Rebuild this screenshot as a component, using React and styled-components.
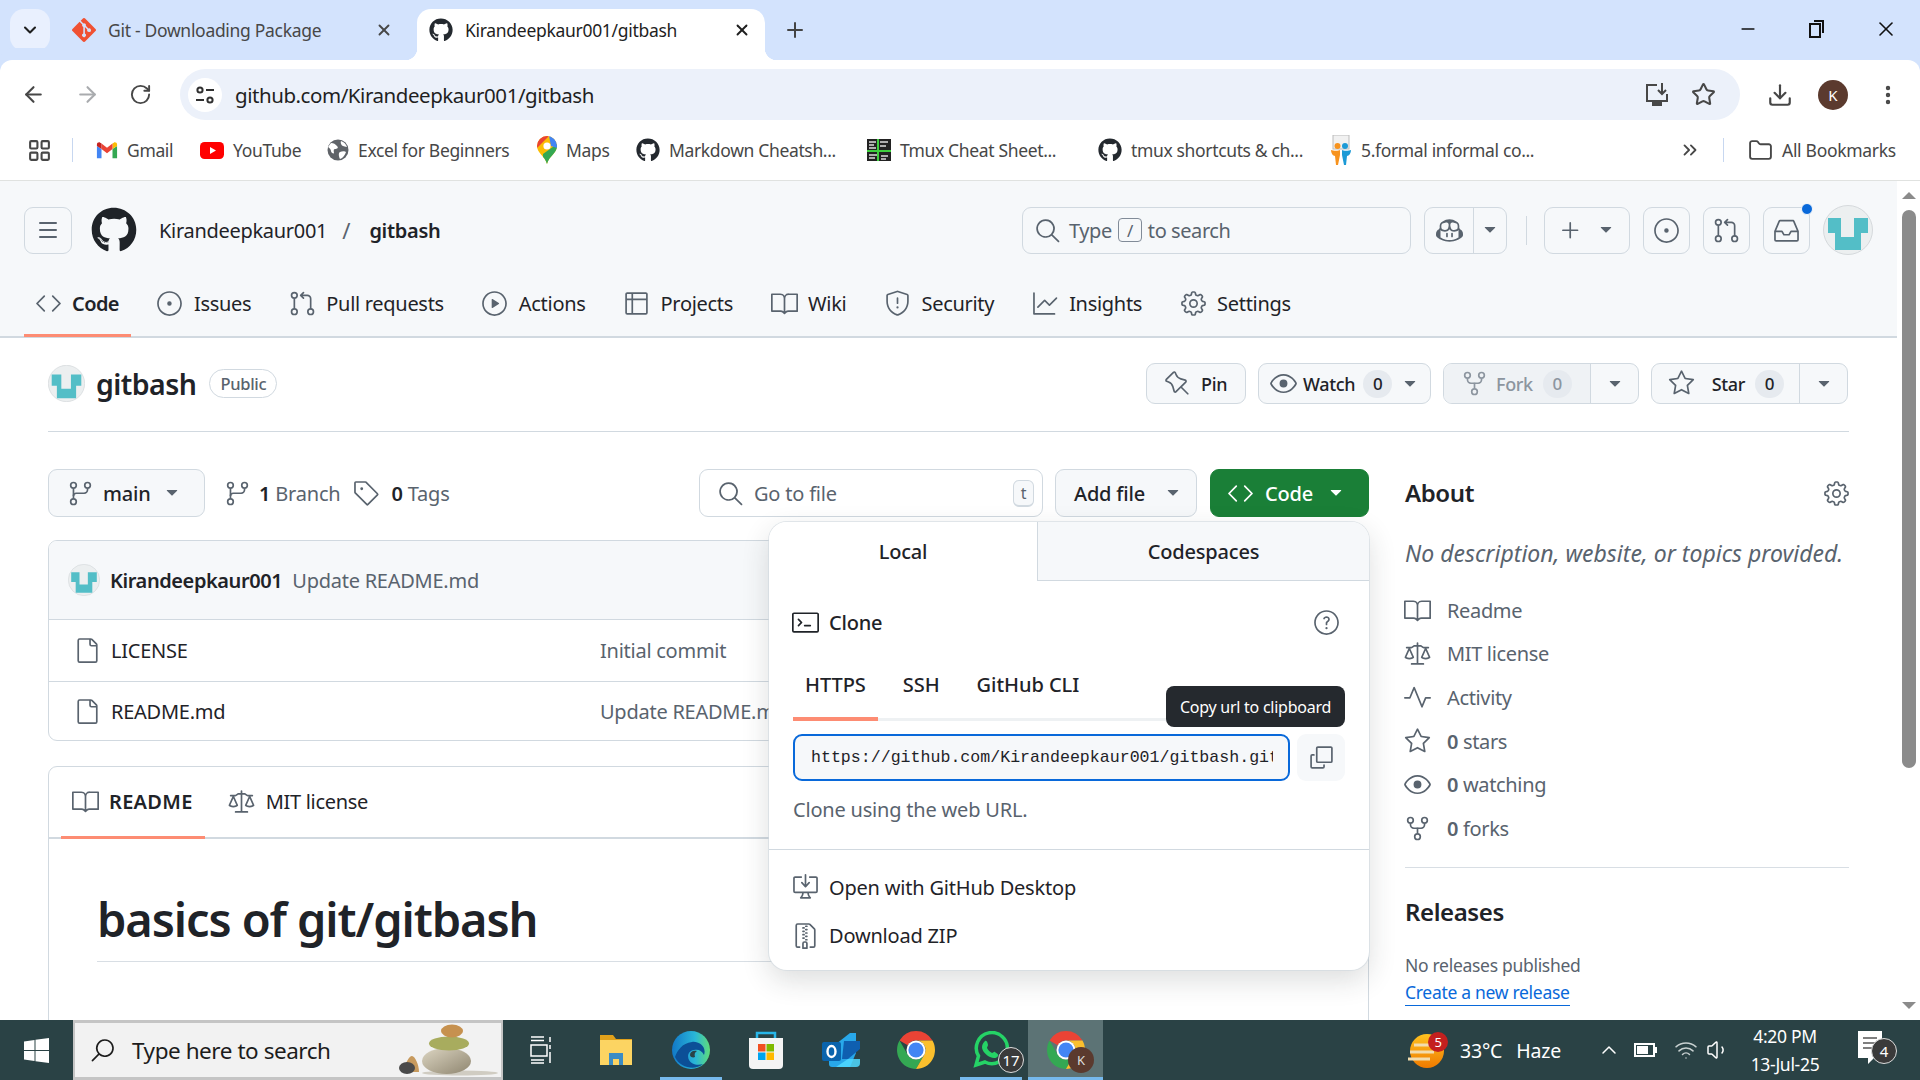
import React from "react";
import styled, { createGlobalStyle } from "styled-components";
import {
  GoBook, GoCode, GoCopilot, GoCopy, GoDesktopDownload, GoEye, GoFile, GoFileZip, GoGear, GoGitBranch,
  GoGitPullRequest, GoGraph, GoInbox, GoIssueOpened, GoLaw, GoPin, GoPlay, GoPlus, GoPulse,
  GoQuestion, GoRepoForked, GoSearch, GoShield, GoStar, GoTable, GoTag, GoTerminal, GoTriangleDown,
} from "react-icons/go";
import { FaGithub } from "react-icons/fa";
import {
  ArrowLeft, ArrowRight, ChevronDown, ChevronUp, ChevronsRight, Download, EllipsisVertical, Folder, LayoutGrid,
  Menu, Minus, Plus, RotateCw, Star, Volume1, Wifi, X,
} from "lucide-react";

const sans = `"Noto Sans", "Open Sans", sans-serif`;
const ink = "#1f2328";
const muted = "#59636e";
const line = "#d1d9e0";

const GlobalStyle = createGlobalStyle`
  html, body { margin: 0; padding: 0; background: #fff; }
  body { font-family: ${sans}; color: ${ink}; }
  * { box-sizing: border-box; }
`;

// octicon drawn a bit larger than its 24px slot, the glyphs have padding in the viewBox
const Oct = styled(({ icon: Icon, className }) => <Icon size={27} className={className} />)`
  margin: -1.5px;
  flex: none;
`;

const Screen = styled.div`
  width: 1920px;
  height: 1080px;
  display: flex;
  flex-direction: column;
  overflow: hidden;
`;

/* browser chrome */
const TabStrip = styled.div`
  height: 60px;
  flex: none;
  display: flex;
  align-items: flex-end;
  background: #d3e3fd;
  padding-left: 10px;
`;
const TabList = styled.div`
  width: 40px;
  height: 42px;
  margin-bottom: 9px;
  border-radius: 14px;
  background: #e9f0fe;
  display: flex;
  align-items: center;
  justify-content: center;
  color: #1f1f1f;
`;
const BrowserTab = styled.div`
  position: relative;
  height: 51px;
  width: ${(p) => p.$w}px;
  margin-left: ${(p) => p.$ml || 0}px;
  padding: 0 ${(p) => p.$pr || 12}px 10px 12px;
  display: flex;
  align-items: center;
  gap: 12px;
  font-size: 17.5px;
  letter-spacing: -0.3px;
  border-radius: 14px 14px 0 0;
  background: ${(p) => (p.$active ? "#fff" : "transparent")};
  color: ${(p) => (p.$active ? "#1f1f1f" : "#474747")};
  span { flex: 1; white-space: nowrap; }
  ${(p) =>
    p.$active &&
    `
    &::before, &::after { content: ""; position: absolute; bottom: 0; width: 12px; height: 12px; }
    &::before { left: -12px; background: radial-gradient(circle at 0 0, #d3e3fd 12px, #fff 12.5px); }
    &::after { right: -12px; background: radial-gradient(circle at 100% 0, #d3e3fd 12px, #fff 12.5px); }
  `}
`;
const NewTab = styled.div`
  margin: 0 0 18px 18px;
  color: #444;
  display: flex;
`;
const WindowButtons = styled.div`
  margin-left: auto;
  align-self: flex-start;
  display: flex;
  height: 58px;
  align-items: center;
  color: #111;
`;
const WindowButton = styled.div`
  width: 69px;
  display: flex;
  justify-content: center;
`;
const Toolbar = styled.div`
  height: 60px;
  flex: none;
  background: #fff;
  display: flex;
  align-items: flex-start;
  padding: 9px 0 0 21px;
  border-radius: 12px 12px 0 0;
  box-shadow: 0 -12px 0 #d3e3fd;
`;
const NavIcon = styled.div`
  width: 54px;
  height: 51px;
  display: flex;
  align-items: center;
  justify-content: flex-start;
  color: ${(p) => (p.$off ? "#a9abae" : "#474747")};
`;
const Omnibox = styled.div`
  width: 1560px;
  height: 51px;
  margin-left: -3px;
  border-radius: 26px;
  background: #ecf1fa;
  display: flex;
  align-items: center;
  padding: 0 24px 0 8px;
`;
const SiteChip = styled.div`
  width: 34px;
  height: 34px;
  border-radius: 50%;
  background: #fff;
  display: flex;
  align-items: center;
  justify-content: center;
`;
const UrlText = styled.div`
  flex: 1;
  margin-left: 13px;
  font-size: 20.5px;
  letter-spacing: -0.45px;
  color: #1f1f1f;
`;
const OmniIcons = styled.div`
  display: flex;
  gap: 21px;
  color: #474747;
`;
const ProfileGroup = styled.div`
  display: flex;
  align-items: center;
  height: 51px;
  margin-left: 27px;
  color: #474747;
`;
const ProfileDot = styled.div`
  width: 30px;
  height: 30px;
  margin: 0 28px 0 25px;
  border-radius: 50%;
  background: #5b3a2e;
  color: #fff;
  font-size: 15px;
  display: flex;
  align-items: center;
  justify-content: center;
`;
const BookmarkBar = styled.div`
  height: 60px;
  flex: none;
  background: #fff;
  display: flex;
  align-items: center;
  padding-left: 27px;
  font-size: 17.5px;
  letter-spacing: -0.35px;
  color: #474747;
`;
const BarSep = styled.div`
  width: 1px;
  height: 24px;
  margin: ${(p) => p.$m};
  background: #c7d7f0;
`;
const Bookmark = styled.div`
  width: ${(p) => p.$w}px;
  display: flex;
  align-items: center;
  gap: 9px;
  white-space: nowrap;
  svg { flex: none; }
`;
const Overflow = styled.div`
  margin-left: auto;
  display: flex;
  align-items: center;
  padding-right: 22px;
  font-size: 17.5px;
  letter-spacing: -0.3px;
`;

/* github page */
const Viewport = styled.div`
  height: 840px;
  flex: none;
  display: flex;
  overflow: hidden;
  border-top: 1px solid #e0e2e0;
`;
const Page = styled.div`
  width: 1897px;
  flex: none;
`;
const AppHeader = styled.header`
  height: 157px;
  background: #f6f8fa;
  border-bottom: 2px solid ${line};
`;
const TopBar = styled.div`
  height: 98px;
  display: flex;
  align-items: center;
  padding: 0 24px;
`;
const HeaderButton = styled.div`
  width: ${(p) => p.$w || 47}px;
  height: 47px;
  flex: none;
  display: flex;
  align-items: center;
  justify-content: center;
  gap: ${(p) => p.$gap || 0}px;
  border: 1px solid ${line};
  border-radius: 9px;
  color: ${muted};
`;
const LogoLink = styled.div`
  margin: 0 22px 0 19px;
  display: flex;
  color: ${ink};
`;
const Crumb = styled.div`
  font-size: 20px;
  letter-spacing: -0.3px;
  font-weight: ${(p) => p.$w || 400};
`;
const CrumbSlash = styled.div`
  font-size: 22px;
  color: ${muted};
  margin: 0 19px 0 15px;
`;
const TopRight = styled.div`
  margin-left: auto;
  display: flex;
  align-items: center;
  gap: 13px;
`;
const SearchBox = styled.div`
  width: 389px;
  height: 47px;
  border: 1px solid ${line};
  border-radius: 9px;
  display: flex;
  align-items: center;
  padding-left: 12px;
  gap: 6px;
  font-size: 20px;
  letter-spacing: -0.42px;
  color: ${muted};
  > svg { margin-right: 2.5px; }
`;
const Kbd = styled.span`
  width: 24px;
  height: 24px;
  border: 1px solid #818b98;
  border-radius: 4px;
  font-size: 17px;
  display: flex;
  align-items: center;
  justify-content: center;
`;
const SplitButton = styled.div`
  width: ${(p) => p.$w}px;
  height: ${(p) => p.$h || 47}px;
  display: flex;
  border: 1px solid ${line};
  border-radius: 9px;
  overflow: hidden;
  color: ${muted};
`;
const SplitPart = styled.div`
  flex: ${(p) => (p.$w ? "none" : 1)};
  width: ${(p) => (p.$w ? `${p.$w}px` : "auto")};
  display: flex;
  align-items: center;
  justify-content: center;
  & + & { border-left: 1px solid ${line}; }
`;
const VertRule = styled.div`
  width: 1px;
  height: 29px;
  margin: 0 4px 0 6px;
  background: ${line};
`;
const InboxWrap = styled.div`
  position: relative;
`;
const BlueDot = styled.div`
  position: absolute;
  top: -4px;
  right: -3px;
  width: 12px;
  height: 12px;
  border-radius: 50%;
  background: #0969da;
  border: 1px solid #f6f8fa;
`;
const RepoNav = styled.nav`
  height: 57px;
  display: flex;
  gap: 15px;
  padding-left: 24px;
`;
const Tab = styled.div`
  height: ${(p) => p.$h || 58}px;
  padding: 0 12px ${(p) => (p.$flush ? 0 : 6)}px;
  display: flex;
  align-items: center;
  gap: 12px;
  font-size: 20px;
  letter-spacing: ${(p) => (p.$active ? (p.$flush ? "0.3px" : "-0.6px") : "-0.3px")};
  white-space: nowrap;
  font-weight: ${(p) => (p.$active ? 600 : 400)};
  border-bottom: 3px solid ${(p) => (p.$active ? "#fd8c73" : "transparent")};
  svg { color: ${muted}; }
`;
const Main = styled.main`
  padding: 0 48px;
`;
const RepoTitleRow = styled.div`
  height: 94px;
  display: flex;
  align-items: center;
  padding-bottom: 2px;
  border-bottom: 1px solid ${line};
`;
const RepoName = styled.h1`
  margin: 0 0 0 11px;
  font-size: 28.5px;
  font-weight: 600;
  letter-spacing: -0.55px;
`;
const PublicBadge = styled.div`
  margin-left: 13px;
  width: 68px;
  height: 29px;
  border: 1px solid ${line};
  border-radius: 15px;
  font-size: 16.5px;
  font-weight: 500;
  letter-spacing: -0.3px;
  color: ${muted};
  display: flex;
  align-items: center;
  justify-content: center;
`;
const RepoActions = styled.div`
  margin-left: auto;
  display: flex;
  gap: 12px;
  margin-right: 1px;
`;
const ActionButton = styled.div`
  width: ${(p) => p.$w}px;
  height: 41px;
  display: flex;
  align-items: center;
  gap: ${(p) => p.$gap ?? 10}px;
  padding-left: ${(p) => p.$pl}px;
  background: ${(p) => (p.$off ? "#eff2f5" : "#f6f8fa")};
  border: 1px solid ${line};
  border-radius: 9px;
  font-size: 18px;
  font-weight: 500;
  letter-spacing: -0.35px;
  color: ${(p) => (p.$off ? "#8c959f" : ink)};
  svg { color: ${(p) => (p.$off ? "#8c959f" : muted)}; }
`;
const ActionGroup = styled.div`
  width: ${(p) => p.$w}px;
  height: 41px;
  display: flex;
  border: 1px solid ${line};
  border-radius: 9px;
  overflow: hidden;
  background: #f6f8fa;
`;
const ActionMain = styled.div`
  width: ${(p) => p.$w}px;
  flex: none;
  display: flex;
  align-items: center;
  gap: 10px;
  padding-left: ${(p) => p.$pl}px;
  font-size: 18px;
  font-weight: 500;
  letter-spacing: -0.35px;
  background: ${(p) => (p.$off ? "#eff2f5" : "transparent")};
  color: ${(p) => (p.$off ? "#8c959f" : ink)};
  border-right: 1px solid ${line};
  svg { color: ${(p) => (p.$off ? "#8c959f" : muted)}; }
`;
const ActionCaret = styled.div`
  flex: 1;
  display: flex;
  align-items: center;
  justify-content: center;
  color: ${muted};
`;
const Counter = styled.span`
  min-width: 29px;
  height: 28px;
  border-radius: 15px;
  background: #e6eaef;
  display: flex;
  align-items: center;
  justify-content: center;
  font-size: 17px;
  font-weight: 500;
`;
const Columns = styled.div`
  display: grid;
  grid-template-columns: 1321px 444px;
  column-gap: 36px;
  padding-top: 37px;
`;
const LeftColumn = styled.div`
  position: relative;
`;
const FileBar = styled.div`
  height: 48px;
  display: flex;
  align-items: center;
  font-size: 20px;
  letter-spacing: -0.2px;
`;
const BarButton = styled.div`
  width: ${(p) => p.$w}px;
  height: 48px;
  flex: none;
  margin-left: ${(p) => p.$ml || 0}px;
  padding-left: ${(p) => p.$pl}px;
  display: flex;
  align-items: center;
  gap: ${(p) => p.$gap || 13}px;
  border: 1px solid ${(p) => (p.$green ? "#1a7f37" : line)};
  border-radius: 9px;
  background: ${(p) => (p.$green ? "#1a7f37" : "#f6f8fa")};
  color: ${(p) => (p.$green ? "#fff" : ink)};
  font-weight: 500;
  svg { color: ${(p) => (p.$green ? "#fff" : muted)}; }
`;
const BarStat = styled.div`
  display: flex;
  align-items: center;
  gap: ${(p) => p.$gap}px;
  margin-left: ${(p) => p.$ml}px;
  color: ${muted};
  b { color: ${ink}; font-weight: 600; }
`;
const GoToFile = styled.div`
  width: 344px;
  height: 48px;
  margin-left: auto;
  display: flex;
  align-items: center;
  gap: 12px;
  padding: 0 8px 0 18px;
  border: 1px solid ${line};
  border-radius: 9px;
  color: ${muted};
  span { flex: 1; }
`;
const KeyHint = styled.kbd`
  width: 21px;
  height: 27px;
  font-family: ${sans};
  font-size: 16px;
  color: ${muted};
  background: #f6f8fa;
  border: 1px solid ${line};
  border-bottom-width: 2px;
  border-radius: 6px;
  display: flex;
  align-items: center;
  justify-content: center;
`;
const FileBox = styled.section`
  margin-top: 23px;
  height: 201px;
  border: 1px solid ${line};
  border-radius: 9px;
  overflow: hidden;
`;
const CommitHead = styled.div`
  height: 79px;
  display: flex;
  align-items: center;
  padding-left: 19px;
  gap: 10px;
  background: #f6f8fa;
  border-bottom: 1px solid ${line};
  font-size: 20px;
  letter-spacing: -0.25px;
  b { font-weight: 600; letter-spacing: -0.42px; }
  span { color: ${muted}; }
`;
const FileRow = styled.div`
  height: 60.5px;
  display: grid;
  grid-template-columns: 525px 1fr;
  align-items: center;
  padding-left: 26px;
  font-size: 20px;
  letter-spacing: -0.25px;
  white-space: nowrap;
  & + & { border-top: 1px solid ${line}; }
`;
const FileName = styled.div`
  display: flex;
  align-items: center;
  gap: 12px;
  svg { color: ${muted}; }
`;
const FileCommit = styled.div`
  color: ${muted};
`;
const ReadmeBox = styled.section`
  margin-top: 25px;
  height: 400px;
  border: 1px solid ${line};
  border-radius: 9px 9px 0 0;
`;
const ReadmeTabs = styled.div`
  height: 72px;
  display: flex;
  gap: 13px;
  padding-left: 12px;
  border-bottom: 2px solid ${line};
`;
const ReadmeBody = styled.div`
  padding: 48px 48px 0;
`;
const Heading = styled.h2`
  margin: 0;
  height: 75px;
  font-size: 47px;
  line-height: 64px;
  font-weight: 600;
  letter-spacing: -1.1px;
  border-bottom: 1px solid #d8dee4;
`;

/* code popup */
const Popup = styled.div`
  position: absolute;
  left: 721px;
  top: 53px;
  width: 600px;
  height: 448px;
  background: #fff;
  border-radius: 18px;
  box-shadow: 0 0 0 1px rgba(209, 217, 224, 0.6), 0 10px 28px rgba(37, 41, 46, 0.16);
  overflow: hidden;
  font-size: 20px;
  letter-spacing: -0.2px;
`;
const PopupTabs = styled.div`
  height: 59px;
  display: grid;
  grid-template-columns: 268px 1fr;
`;
const PopupTab = styled.div`
  display: flex;
  align-items: center;
  justify-content: center;
  font-weight: 500;
  background: ${(p) => (p.$active ? "#fff" : "#f6f8fa")};
  border-left: ${(p) => (p.$active ? "none" : `1px solid ${line}`)};
  border-bottom: ${(p) => (p.$active ? "none" : `1px solid ${line}`)};
`;
const CloneHead = styled.div`
  height: 82px;
  padding: 0 31px 0 24px;
  display: flex;
  align-items: center;
  gap: 12px;
  font-weight: 500;
  svg:last-child { margin-left: auto; color: ${muted}; }
`;
const SubTabs = styled.div`
  height: 58px;
  margin: 0 24px;
  display: flex;
  gap: 13px;
  border-bottom: 3px solid #eef1f3;
`;
const SubTab = styled.div`
  height: 58px;
  padding: 0 12px 11px;
  display: flex;
  align-items: center;
  font-weight: 500;
  letter-spacing: -0.05px;
  border-bottom: 4px solid ${(p) => (p.$active ? "#fd8c73" : "transparent")};
`;
const Tooltip = styled.div`
  position: absolute;
  top: 164px;
  right: 24px;
  width: 179px;
  height: 41px;
  border-radius: 8px;
  background: #25292e;
  color: #fff;
  font-size: 16px;
  letter-spacing: -0.25px;
  display: flex;
  align-items: center;
  justify-content: center;
`;
const UrlRow = styled.div`
  margin: 13px 24px 0;
  display: flex;
  gap: 7px;
`;
const UrlInput = styled.input`
  width: 497px;
  height: 47px;
  padding: 0 15px 0 16px;
  border: 2px solid #0969da;
  border-radius: 9px;
  background: #f6f8fa;
  color: ${ink};
  font-family: "Liberation Mono", monospace;
  font-size: 16.6px;
  letter-spacing: 0;
  outline: none;
`;
const CopyButton = styled.div`
  width: 48px;
  height: 47px;
  border-radius: 9px;
  background: #f6f8fa;
  color: ${muted};
  display: flex;
  align-items: center;
  justify-content: center;
`;
const CloneHint = styled.div`
  margin: 17px 24px 0;
  line-height: 24px;
  color: ${muted};
`;
const PopupRule = styled.div`
  margin-top: 27px;
  height: 1px;
  background: ${line};
`;
const PopupMenu = styled.div`
  padding-top: 13px;
`;
const PopupItem = styled.div`
  height: 48px;
  padding-left: 24px;
  display: flex;
  align-items: center;
  gap: 12px;
  svg { color: ${muted}; }
`;

/* sidebar */
const Sidebar = styled.aside`
  font-size: 20px;
  letter-spacing: -0.35px;
`;
const SideTitleRow = styled.div`
  height: 48px;
  display: flex;
  align-items: center;
  justify-content: space-between;
  padding-right: 1px;
  svg { color: ${muted}; }
`;
const SideTitle = styled.h2`
  margin: 0;
  font-size: 24px;
  line-height: 30px;
  font-weight: 600;
  letter-spacing: -0.4px;
`;
const Description = styled.p`
  margin: 22px 0 0;
  line-height: 28px;
  font-size: 23px;
  font-style: italic;
  letter-spacing: 0;
  color: ${muted};
  white-space: nowrap;
`;
const MetaList = styled.div`
  margin-top: 21.500px;
  padding-bottom: 17px;
  border-bottom: 1px solid #d8dee4;
`;
const MetaRow = styled.div`
  height: 43.6px;
  display: flex;
  align-items: center;
  gap: 18px;
  color: ${muted};
  b { font-weight: 600; }
`;
const ReleaseHead = styled(SideTitle)`
  margin-top: 28.5px;
`;
const NoRelease = styled.div`
  margin-top: 26px;
  font-size: 17.5px;
  line-height: 24px;
  letter-spacing: -0.3px;
  color: ${muted};
`;
const ReleaseLink = styled.a`
  display: inline-block;
  margin-top: 2px;
  font-size: 17.5px;
  line-height: 26px;
  letter-spacing: -0.3px;
  color: #0969da;
  border-bottom: 1px solid #0969da;
`;

/* scrollbar */
const Scrollbar = styled.div`
  flex: 1;
  display: flex;
  flex-direction: column;
  align-items: center;
  background: #fff;
`;
const ScrollArrow = styled.div`
  height: 29px;
  display: flex;
  align-items: center;
  justify-content: center;
  margin-top: ${(p) => (p.$down ? "auto" : 0)};
  &::after {
    content: "";
    border-left: 7px solid transparent;
    border-right: 7px solid transparent;
    ${(p) => (p.$down ? "border-top" : "border-bottom")}: 7px solid #8b8b8b;
  }
`;
const ScrollThumb = styled.div`
  width: 14px;
  height: 558px;
  border-radius: 7px;
  background: #8b8b8b;
`;

/* taskbar */
const Taskbar = styled.footer`
  height: 60px;
  flex: none;
  display: flex;
  align-items: stretch;
  background: #2a4245;
  color: #fff;
`;
const StartCell = styled.div`
  width: 73px;
  display: flex;
  align-items: center;
  justify-content: center;
`;
const TaskSearch = styled.div`
  width: 430px;
  border: 3px solid #c5c5c5;
  border-left-width: 2px;
  border-right-width: 2px;
  background: #f2f2f2;
  color: #1c1c1c;
  display: flex;
  align-items: center;
  padding: 0 3px 0 15px;
  gap: 16px;
  font-size: 22.5px;
  letter-spacing: -0.45px;
  span { flex: 1; }
  > svg:first-child { transform: scaleX(-1); }
`;
const TaskCell = styled.div`
  position: relative;
  width: 75px;
  display: flex;
  align-items: center;
  justify-content: center;
  background-color: ${(p) => (p.$focus ? "#5c7375" : "transparent")};
  background-image: ${(p) => (p.$running ? "linear-gradient(#76b9ed, #76b9ed)" : "none")};
  background-repeat: no-repeat;
  background-position: center bottom;
  background-size: ${(p) => (p.$focus ? "100%" : "62px")} 3px;
`;
const TaskBadge = styled.div`
  position: absolute;
  right: ${(p) => p.$r}px;
  bottom: ${(p) => p.$b}px;
  width: ${(p) => p.$s || 26}px;
  height: ${(p) => p.$s || 26}px;
  border-radius: 50%;
  background: ${(p) => p.$bg || "#3a3a3a"};
  border: ${(p) => (p.$ring ? "1px solid #ddd" : "none")};
  color: ${(p) => p.$fg || "#fff"};
  font-size: ${(p) => p.$fs || 15}px;
  display: flex;
  align-items: center;
  justify-content: center;
`;
const Tray = styled.div`
  margin-left: auto;
  display: flex;
  align-items: center;
  padding-right: 25px;
  font-size: 19.5px;
  letter-spacing: -0.2px;
`;
const TrayWeather = styled.div`
  position: relative;
  width: 36px;
  height: 36px;
  margin-right: 16px;
`;
const TrayLabel = styled.span`
  margin-right: ${(p) => p.$mr}px;
`;
const TrayIcon = styled.div`
  display: flex;
  margin-left: ${(p) => p.$ml}px;
`;
const Clock = styled.div`
  width: 76px;
  margin: 0 34px 0 17px;
  text-align: center;
  font-size: 17.5px;
  line-height: 28px;
  letter-spacing: -0.3px;
  white-space: nowrap;
`;
const NoteWrap = styled.div`
  position: relative;
  width: 38px;
  display: flex;
  align-items: center;
`;

/* hand drawn icons */
const GitMark = () => (
  <svg width="24" height="24" viewBox="0 0 24 24">
    <path fill="#f05133" d="M23.5 10.9 13.1.5a1.6 1.6 0 0 0-2.2 0L8.7 2.7l2.7 2.7a1.9 1.9 0 0 1 2.4 2.4l2.6 2.6a1.9 1.9 0 1 1-1.1 1.1l-2.4-2.4v6.4a1.9 1.9 0 1 1-1.6-.1V8.9a1.9 1.9 0 0 1-1-2.5L7.6 3.8.5 10.9a1.6 1.6 0 0 0 0 2.2l10.4 10.4a1.6 1.6 0 0 0 2.2 0l10.4-10.4a1.6 1.6 0 0 0 0-2.2z" />
  </svg>
);
const TuneIcon = () => (
  <svg width="22" height="22" viewBox="0 0 22 22" fill="none" stroke="#303030" strokeWidth="2">
    <circle cx="6" cy="6" r="2.6" />
    <path d="M12 6h8M2 16h8" />
    <circle cx="16" cy="16" r="2.6" />
  </svg>
);
const InstallIcon = () => (
  <svg width="26" height="26" viewBox="0 0 26 26" fill="none" stroke="#474747" strokeWidth="2">
    <path d="M13 3H3v16h20v-7" />
    <path fill="#474747" d="M9 19h8v4H9z" />
    <path d="M18 1v10M14 8l4 4 4-4" />
  </svg>
);
const GmailIcon = () => (
  <svg width="22" height="22" viewBox="0 0 24 24">
    <path fill="#4285f4" d="M1 21h5V11L1 7.5z" />
    <path fill="#34a853" d="M18 21h5V7.5L18 11z" />
    <path fill="#fbbc04" d="M18 5v6l5-3.5V6c0-2-2.3-3-3.6-2z" />
    <path fill="#ea4335" d="M6 11V5l6 4.5L18 5v6l-6 4.5z" />
    <path fill="#c5221f" d="M1 6v1.5L6 11V5L4.6 4C3.3 3 1 4 1 6z" />
  </svg>
);
const YoutubeIcon = () => (
  <svg width="24" height="24" viewBox="0 0 24 24">
    <rect y="4" width="24" height="17" rx="4.5" fill="#f00" />
    <path fill="#fff" d="M10 9l6 3.5-6 3.5z" />
  </svg>
);
const GlobeIcon = () => (
  <svg width="22" height="22" viewBox="0 0 22 22">
    <circle cx="11" cy="11" r="10.5" fill="#5f6368" />
    <path fill="#fff" d="M4 4c3 0 4 1 6 3s0 3-2 3-1 3-1 4-3 0-3-2-3-4-3-4zM14 2c3 1 5 3 6 6-2 0-3-1-4-1s-3-3-2-5zM13 13c2-1 5-1 6 0-1 3-3 6-6 7-1-2-2-6 0-7z" />
  </svg>
);
const MapsIcon = () => (
  <svg width="20" height="28" viewBox="0 0 20 28">
    <defs>
      <clipPath id="pin">
        <path d="M10 0a10 10 0 0 0-10 10c0 7 8 10 10 18 2-8 10-11 10-18A10 10 0 0 0 10 0z" />
      </clipPath>
    </defs>
    <g clipPath="url(#pin)">
      <rect width="20" height="28" fill="#fbbc04" />
      <path fill="#34a853" d="M6 18 20 8v20H6z" />
      <path fill="#ea4335" d="M0 0h12L0 12z" />
      <path fill="#4285f4" d="M12 0h8v12l-6-2z" />
    </g>
    <circle cx="10" cy="10" r="3.6" fill="#fff" />
  </svg>
);
const TmuxIcon = () => (
  <svg width="24" height="24" viewBox="0 0 24 24">
    <rect y="1" width="24" height="22" fill="#222" />
    <path stroke="#ddd" strokeWidth="1.5" d="M2 4h7M2 7h5M2 10h7M13 4h8M13 8h6M2 17h8M14 18h7M2 20h6M14 21h5" />
    <path stroke="#3ecf3e" strokeWidth="2" d="M0 13h24M11 1v22" />
  </svg>
);
const SlideIcon = () => (
  <svg width="22" height="30" viewBox="0 0 22 30">
    <rect x="3" y="0" width="16" height="14" fill="#f1f1f1" stroke="#bbb" />
    <circle cx="7.5" cy="11" r="3" fill="#f7931e" />
    <circle cx="15" cy="11" r="3" fill="#1c9ad6" />
    <path fill="#f7931e" d="M1 15c2 1 8 1 9 0v5l-2 10H6l-1-9c-2 0-4-3-4-6z" />
    <path fill="#1c9ad6" d="M21 15c-2 1-8 1-9 0v5l2 10h2l1-9c2 0 4-3 4-6z" />
  </svg>
);
const RestoreIcon = () => (
  <svg width="16" height="18" viewBox="0 0 16 18" fill="none" stroke="#111" strokeWidth="2">
    <rect x="1" y="4" width="10" height="13" />
    <path d="M5 1h9v12" />
  </svg>
);
const Avatar = ({ size }) => (
  <svg width={size} height={size} viewBox="0 0 50 50">
    <circle cx="25" cy="25" r="24.5" fill="#eceff0" stroke="#d5d9dc" />
    <path fill="#53bec7" d="M5 13h13v19h13V13h14v15h-7v17H12V28H5z" />
  </svg>
);
const WindowsLogo = () => (
  <svg width="25" height="25" viewBox="0 0 25 25" fill="#fff">
    <path d="M0 3.5 10.5 2v10H0zM11.5 1.8 25 0v12H11.5zM0 13h10.5v10L0 21.5zM11.5 13H25v12l-13.5-1.8z" />
  </svg>
);
const Pebbles = () => (
  <svg width="100" height="54" viewBox="0 0 100 54">
    <defs>
      <linearGradient id="stoneA" x1="0" x2="1" y1="0" y2="1">
        <stop offset="0" stopColor="#dcd5c2" />
        <stop offset="1" stopColor="#8f8670" />
      </linearGradient>
    </defs>
    <ellipse cx="62" cy="50" rx="38" ry="2.5" fill="#d0ccc2" />
    <ellipse cx="48.5" cy="38" rx="24.5" ry="13" fill="url(#stoneA)" />
    <ellipse cx="51" cy="20.5" rx="20" ry="7" fill="#a8ac5e" />
    <ellipse cx="54" cy="8" rx="11" ry="6.5" fill="#c6914f" />
    <path fill="#c79a5e" d="M6 49c1-9 5-16 8-16s7 9 7 16z" />
    <ellipse cx="9" cy="45" rx="8" ry="6" fill="#4a4a4a" />
  </svg>
);
const TaskView = () => (
  <svg width="26" height="28" viewBox="0 0 26 28" fill="none" stroke="#fff" strokeWidth="1.5">
    <path d="M3 1h13M3 4.5h13M3 9h16v11H3zM3 24h13M3 27h13M22 1v5M22 9v4M22 16v11" />
  </svg>
);
const ExplorerIcon = () => (
  <svg width="34" height="32" viewBox="0 0 34 32">
    <path fill="#e0a11b" d="M1 1h13l3 4h16v4H1z" />
    <path fill="#fcd462" d="M1 6h32v25H1z" />
    <path fill="#3b8cc4" d="M10 31V19h14v12h-4v-6h-6v6z" />
  </svg>
);
const EdgeIcon = () => (
  <svg width="38" height="38" viewBox="0 0 38 38">
    <defs>
      <linearGradient id="edgeA" x1="0" x2="1" y1="0" y2="0">
        <stop offset="0" stopColor="#1278c8" />
        <stop offset=".6" stopColor="#29b6d8" />
        <stop offset="1" stopColor="#5fdc7a" />
      </linearGradient>
    </defs>
    <circle cx="19" cy="19" r="19" fill="url(#edgeA)" />
    <path fill="#0c4f97" d="M3 26c5 11 20 14 28 7-6 2-12 0-14-4s-1-9 5-10c5-1 8 1 10 5 3-9-6-14-12-13C10 12 5 20 3 26z" />
    <path fill="#2a4245" d="M18 24c0-3 3-5 7-4-2 1-3 3-2 6-2 1-5 0-5-2z" />
  </svg>
);
const StoreIcon = () => (
  <svg width="36" height="38" viewBox="0 0 36 38">
    <path fill="none" stroke="#29b6e8" strokeWidth="2.5" d="M9 9V2h18v7" />
    <path fill="#f4f4f4" d="M1 7h34v27a4 4 0 0 1-4 4H5a4 4 0 0 1-4-4z" />
    <path fill="#f25022" d="M10 13h7.5v7.5H10z" />
    <path fill="#7fba00" d="M18.5 13H26v7.5h-7.5z" />
    <path fill="#00a4ef" d="M10 21.5h7.5V29H10z" />
    <path fill="#ffb900" d="M18.5 21.5H26V29h-7.5z" />
  </svg>
);
const OutlookIcon = () => (
  <svg width="38" height="34" viewBox="0 0 38 34">
    <path fill="#28a8ea" d="M14 11 28 0h6v20l-6 14H10a3 3 0 0 1-3-3V20z" />
    <path fill="#0f5fb0" d="M22 8h16v8L26 26h-6z" />
    <path fill="#50d9ff" d="M26 26h12v4a4 4 0 0 1-4 4H14z" opacity=".85" />
    <rect y="9" width="19" height="19" rx="2" fill="#0a64ad" />
    <ellipse cx="9.5" cy="18.5" rx="4" ry="5.5" fill="none" stroke="#fff" strokeWidth="2.4" />
  </svg>
);
const ChromeIcon = () => (
  <svg width="38" height="38" viewBox="4 4 40 40">
    <path fill="#ea4335" d="M24 4a20 20 0 0 1 17.32 10H24a10 10 0 0 0-8.66 5L6.68 14A20 20 0 0 1 24 4z" />
    <path fill="#34a853" d="M6.68 14l8.66 15A10 10 0 0 0 32.66 29L24 44A20 20 0 0 1 6.68 14z" />
    <path fill="#fbc02d" d="M41.32 14H24a10 10 0 0 1 8.66 15L24 44a20 20 0 0 0 17.32-30z" />
    <circle cx="24" cy="24" r="10" fill="#fff" />
    <circle cx="24" cy="24" r="8" fill="#4285f4" />
  </svg>
);
const WhatsappIcon = () => (
  <svg width="36" height="38" viewBox="0 0 36 38" fill="none">
    <path stroke="#25d366" strokeWidth="3.5" d="M3 34l2.5-9A15.5 15.5 0 1 1 12 31z" />
    <path fill="#25d366" d="M12 10c2-1 3 3 3 4s-1 2-1 3c1 2 3 4 5 5 1 0 2-2 3-1s4 2 3 4-4 3-8 1-8-6-8-10c0-3 2-5 3-6z" />
  </svg>
);
const WeatherIcon = () => (
  <svg width="36" height="38" viewBox="0 0 36 38">
    <defs>
      <linearGradient id="sunA" x1="0" x2="0" y1="0" y2="1">
        <stop offset="0" stopColor="#ffc21f" />
        <stop offset="1" stopColor="#ef7a00" />
      </linearGradient>
    </defs>
    <circle cx="19" cy="19" r="17" fill="url(#sunA)" />
    <path stroke="#f2dcae" strokeWidth="3" d="M6 13h20M2 20h24M0 27h22" />
  </svg>
);
const BatteryIcon = () => (
  <svg width="24" height="14" viewBox="0 0 24 14">
    <rect x="1" y="1" width="19" height="12" fill="none" stroke="#fff" strokeWidth="2" />
    <rect x="3" y="3" width="11" height="8" fill="#fff" />
    <rect x="21" y="4" width="2" height="6" fill="#fff" />
  </svg>
);
const NoteIcon = () => (
  <svg width="26" height="38" viewBox="0 0 26 38">
    <path fill="#fff" d="M1 0h24v27H17l-6 6v-6H1z" />
    <path stroke="#555" strokeWidth="1.5" d="M6 7h14M6 12h14M6 17h14" />
  </svg>
);

const navTabs = [
  { label: "Code", icon: GoCode, active: true },
  { label: "Issues", icon: GoIssueOpened },
  { label: "Pull requests", icon: GoGitPullRequest },
  { label: "Actions", icon: GoPlay },
  { label: "Projects", icon: GoTable },
  { label: "Wiki", icon: GoBook },
  { label: "Security", icon: GoShield },
  { label: "Insights", icon: GoGraph },
  { label: "Settings", icon: GoGear },
];

const bookmarks = [
  { label: "Gmail", w: 104, icon: <GmailIcon /> },
  { label: "YouTube", w: 127, icon: <YoutubeIcon /> },
  { label: "Excel for Beginners", w: 210, icon: <GlobeIcon /> },
  { label: "Maps", w: 99, icon: <MapsIcon /> },
  { label: "Markdown Cheatsh...", w: 231, icon: <FaGithub size={24} color="#24292f" /> },
  { label: "Tmux Cheat Sheet...", w: 231, icon: <TmuxIcon /> },
  { label: "tmux shortcuts & ch...", w: 232, icon: <FaGithub size={24} color="#24292f" /> },
  { label: "5.formal informal co...", w: 240, icon: <SlideIcon /> },
];

const metaRows = [
  { icon: GoBook, text: "Readme" },
  { icon: GoLaw, text: "MIT license" },
  { icon: GoPulse, text: "Activity" },
  { icon: GoStar, count: "0", text: "stars" },
  { icon: GoEye, count: "0", text: "watching" },
  { icon: GoRepoForked, count: "0", text: "forks" },
];

function BrowserChrome() {
  return (
    <>
      <TabStrip>
        <TabList><ChevronDown size={20} strokeWidth={2.5} /></TabList>
        <BrowserTab $w={357} $ml={10} $pr={24}>
          <GitMark />
          <span>Git - Downloading Package</span>
          <X size={18} strokeWidth={2.5} />
        </BrowserTab>
        <BrowserTab $w={348} $pr={14} $active>
          <FaGithub size={24} color="#24292f" />
          <span>Kirandeepkaur001/gitbash</span>
          <X size={18} strokeWidth={2.5} />
        </BrowserTab>
        <NewTab><Plus size={24} strokeWidth={2} /></NewTab>
        <WindowButtons>
          <WindowButton><Minus size={20} strokeWidth={2} /></WindowButton>
          <WindowButton><RestoreIcon /></WindowButton>
          <WindowButton><X size={24} strokeWidth={1.6} /></WindowButton>
        </WindowButtons>
      </TabStrip>
      <Toolbar>
        <NavIcon><ArrowLeft size={25} /></NavIcon>
        <NavIcon $off><ArrowRight size={25} /></NavIcon>
        <NavIcon><RotateCw size={23} /></NavIcon>
        <Omnibox>
          <SiteChip><TuneIcon /></SiteChip>
          <UrlText>github.com/Kirandeepkaur001/gitbash</UrlText>
          <OmniIcons>
            <InstallIcon />
            <Star size={25} strokeWidth={2} />
          </OmniIcons>
        </Omnibox>
        <ProfileGroup>
          <Download size={26} />
          <ProfileDot>K</ProfileDot>
          <EllipsisVertical size={24} strokeWidth={2.4} />
        </ProfileGroup>
      </Toolbar>
      <BookmarkBar>
        <LayoutGrid size={25} strokeWidth={2} />
        <BarSep $m="0 23px 0 20px" />
        {bookmarks.map((b) => (
          <Bookmark key={b.label} $w={b.w}>
            {b.icon}
            {b.label}
          </Bookmark>
        ))}
        <Overflow>
          <ChevronsRight size={22} />
          <BarSep $m="0 24px 0 22px" />
          <Bookmark $w={150}>
            <Folder size={25} strokeWidth={1.8} />
            All Bookmarks
          </Bookmark>
        </Overflow>
      </BookmarkBar>
    </>
  );
}

function GithubHeader() {
  return (
    <AppHeader>
      <TopBar>
        <HeaderButton $w={48}><Menu size={24} /></HeaderButton>
        <LogoLink><FaGithub size={46} /></LogoLink>
        <Crumb>Kirandeepkaur001</Crumb>
        <CrumbSlash>/</CrumbSlash>
        <Crumb $w={600}>gitbash</Crumb>
        <TopRight>
          <SearchBox>
            <Oct icon={GoSearch} />
            Type <Kbd>/</Kbd> to search
          </SearchBox>
          <SplitButton $w={83}>
            <SplitPart $w={48}><Oct icon={GoCopilot} /></SplitPart>
            <SplitPart><GoTriangleDown size={20} /></SplitPart>
          </SplitButton>
          <VertRule />
          <HeaderButton $w={86} $gap={14}><Oct icon={GoPlus} /><GoTriangleDown size={20} /></HeaderButton>
          <HeaderButton><Oct icon={GoIssueOpened} /></HeaderButton>
          <HeaderButton><Oct icon={GoGitPullRequest} /></HeaderButton>
          <InboxWrap>
            <HeaderButton><Oct icon={GoInbox} /></HeaderButton>
            <BlueDot />
          </InboxWrap>
          <Avatar size={50} />
        </TopRight>
      </TopBar>
      <RepoNav>
        {navTabs.map(({ label, icon, active }) => (
          <Tab key={label} $active={active}>
            <Oct icon={icon} />
            {label}
          </Tab>
        ))}
      </RepoNav>
    </AppHeader>
  );
}

function RepoTitle() {
  return (
    <RepoTitleRow>
      <Avatar size={37} />
      <RepoName>gitbash</RepoName>
      <PublicBadge>Public</PublicBadge>
      <RepoActions>
        <ActionButton $w={100} $pl={18} $gap={12}><Oct icon={GoPin} />Pin</ActionButton>
        <ActionButton $w={173} $pl={12} $gap={8}>
          <Oct icon={GoEye} />Watch <Counter>0</Counter>
          <GoTriangleDown size={20} />
        </ActionButton>
        <ActionGroup $w={196}>
          <ActionMain $w={147} $pl={18} $off>
            <Oct icon={GoRepoForked} />Fork <Counter>0</Counter>
          </ActionMain>
          <ActionCaret><GoTriangleDown size={20} /></ActionCaret>
        </ActionGroup>
        <ActionGroup $w={197}>
          <ActionMain $w={148} $pl={17}>
            <Oct icon={GoStar} />
            <span>&nbsp;&nbsp;Star</span> <Counter>0</Counter>
          </ActionMain>
          <ActionCaret><GoTriangleDown size={20} /></ActionCaret>
        </ActionGroup>
      </RepoActions>
    </RepoTitleRow>
  );
}

function CodePopup() {
  return (
    <Popup>
      <PopupTabs>
        <PopupTab $active>Local</PopupTab>
        <PopupTab>Codespaces</PopupTab>
      </PopupTabs>
      <CloneHead>
        <Oct icon={GoTerminal} />
        Clone
        <Oct icon={GoQuestion} />
      </CloneHead>
      <SubTabs>
        <SubTab $active>HTTPS</SubTab>
        <SubTab>SSH</SubTab>
        <SubTab>GitHub CLI</SubTab>
      </SubTabs>
      <Tooltip>Copy url to clipboard</Tooltip>
      <UrlRow>
        <UrlInput readOnly value="https://github.com/Kirandeepkaur001/gitbash.git" />
        <CopyButton><Oct icon={GoCopy} /></CopyButton>
      </UrlRow>
      <CloneHint>Clone using the web URL.</CloneHint>
      <PopupRule />
      <PopupMenu>
        <PopupItem><Oct icon={GoDesktopDownload} />Open with GitHub Desktop</PopupItem>
        <PopupItem><Oct icon={GoFileZip} />Download ZIP</PopupItem>
      </PopupMenu>
    </Popup>
  );
}

function RepoFiles() {
  return (
    <LeftColumn>
      <FileBar>
        <BarButton $w={157} $pl={19} $gap={11}>
          <Oct icon={GoGitBranch} /><span>main</span>
          <GoTriangleDown size={20} />
        </BarButton>
        <BarStat $ml={20} $gap={10}><Oct icon={GoGitBranch} /><span><b>1</b> Branch</span></BarStat>
        <BarStat $ml={14} $gap={13}><Oct icon={GoTag} /><span><b>0</b> Tags</span></BarStat>
        <GoToFile>
          <Oct icon={GoSearch} />
          <span>Go to file</span>
          <KeyHint>t</KeyHint>
        </GoToFile>
        <BarButton $w={142} $ml={12} $pl={18} $gap={18}>
          Add file
          <GoTriangleDown size={20} />
        </BarButton>
        <BarButton $w={159} $ml={13} $pl={17} $gap={13} $green>
          <Oct icon={GoCode} />Code
          <GoTriangleDown size={20} />
        </BarButton>
      </FileBar>
      <FileBox>
        <CommitHead>
          <Avatar size={32} />
          <b>Kirandeepkaur001</b>
          <span>Update README.md</span>
        </CommitHead>
        <FileRow>
          <FileName><Oct icon={GoFile} />LICENSE</FileName>
          <FileCommit>Initial commit</FileCommit>
        </FileRow>
        <FileRow>
          <FileName><Oct icon={GoFile} />README.md</FileName>
          <FileCommit>Update README.md</FileCommit>
        </FileRow>
      </FileBox>
      <ReadmeBox>
        <ReadmeTabs>
          <Tab $h={72} $flush $active><Oct icon={GoBook} />README</Tab>
          <Tab $h={72} $flush><Oct icon={GoLaw} />MIT license</Tab>
        </ReadmeTabs>
        <ReadmeBody>
          <Heading>basics of git/gitbash</Heading>
        </ReadmeBody>
      </ReadmeBox>
      <CodePopup />
    </LeftColumn>
  );
}

function About() {
  return (
    <Sidebar>
      <SideTitleRow>
        <SideTitle>About</SideTitle>
        <Oct icon={GoGear} />
      </SideTitleRow>
      <Description>No description, website, or topics provided.</Description>
      <MetaList>
        {metaRows.map(({ icon, count, text }) => (
          <MetaRow key={text}>
            <Oct icon={icon} />
            <span>{count && <b>{count} </b>}{text}</span>
          </MetaRow>
        ))}
      </MetaList>
      <ReleaseHead>Releases</ReleaseHead>
      <NoRelease>No releases published</NoRelease>
      <ReleaseLink>Create a new release</ReleaseLink>
    </Sidebar>
  );
}

function WindowsTaskbar() {
  return (
    <Taskbar>
      <StartCell><WindowsLogo /></StartCell>
      <TaskSearch>
        <GoSearch size={26} />
        <span>Type here to search</span>
        <Pebbles />
      </TaskSearch>
      <TaskCell><TaskView /></TaskCell>
      <TaskCell><ExplorerIcon /></TaskCell>
      <TaskCell $running><EdgeIcon /></TaskCell>
      <TaskCell><StoreIcon /></TaskCell>
      <TaskCell><OutlookIcon /></TaskCell>
      <TaskCell><ChromeIcon /></TaskCell>
      <TaskCell $running>
        <WhatsappIcon />
        <TaskBadge $r={4} $b={7} $ring>17</TaskBadge>
      </TaskCell>
      <TaskCell $running $focus>
        <ChromeIcon />
        <TaskBadge $r={9} $b={7} $bg="#5b3a2e" $fg="#ddd" $fs={13}>K</TaskBadge>
      </TaskCell>
      <Tray>
        <TrayWeather>
          <WeatherIcon />
          <TaskBadge $r={-4} $b={16} $s={20} $bg="#c4201f" $fs={13}>5</TaskBadge>
        </TrayWeather>
        <TrayLabel $mr={14}>33°C</TrayLabel>
        <TrayLabel $mr={0}>Haze</TrayLabel>
        <TrayIcon $ml={36}><ChevronUp size={24} strokeWidth={1.5} /></TrayIcon>
        <TrayIcon $ml={13}><BatteryIcon /></TrayIcon>
        <TrayIcon $ml={16}><Wifi size={24} strokeWidth={1.5} color="#c9d1d1" /></TrayIcon>
        <TrayIcon $ml={8}><Volume1 size={24} strokeWidth={1.5} /></TrayIcon>
        <Clock>4:20 PM<br />13-Jul-25</Clock>
        <NoteWrap>
          <NoteIcon />
          <TaskBadge $r={-2} $b={5} $ring>4</TaskBadge>
        </NoteWrap>
      </Tray>
    </Taskbar>
  );
}

export default function App() {
  return (
    <>
      <GlobalStyle />
      <Screen>
        <BrowserChrome />
        <Viewport>
          <Page>
            <GithubHeader />
            <Main>
              <RepoTitle />
              <Columns>
                <RepoFiles />
                <About />
              </Columns>
            </Main>
          </Page>
          <Scrollbar>
            <ScrollArrow />
            <ScrollThumb />
            <ScrollArrow $down />
          </Scrollbar>
        </Viewport>
        <WindowsTaskbar />
      </Screen>
    </>
  );
}
